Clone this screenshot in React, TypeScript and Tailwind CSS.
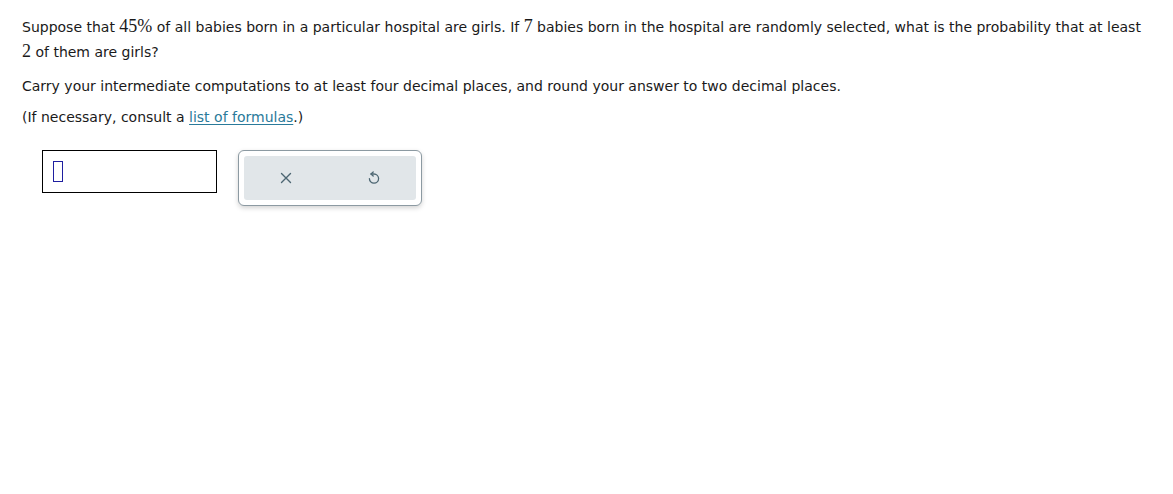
import React from 'react';

const num = "font-['Liberation_Serif',serif] text-[18px]";

export default function App() {
    return (
        <main className="min-h-screen w-full bg-white text-[#1a1a1a] font-['DejaVu_Sans',Verdana,sans-serif] text-[14px]">
            <div className="pl-[22px] pr-[30px] pt-[14px]">
                {/* Question */}
                <p className="leading-[24px]">
                    Suppose that <span className={num}>45%</span> of all babies born in a particular hospital are girls. If{' '}
                    <span className={num}>7</span> babies born in the hospital are randomly selected, what is the probability that at least{' '}
                    <span className={num}>2</span> of them are girls?
                </p>
                <p className="mt-[12px] leading-[20px]">
                    Carry your intermediate computations to at least four decimal places, and round your answer to two decimal places.
                </p>
                <p className="mt-[11px] leading-[20px]">
                    (If necessary, consult a{' '}
                    <a href="#" className="text-[#2a7a9a] underline underline-offset-2">list of formulas</a>.)
                </p>

                {/* Answer area */}
                <div className="mt-[23px] ml-[20px] flex items-start gap-[21px]">
                    <div className="w-[175px] h-[43px] border border-black flex items-center pl-[10px]">
                        <div className="w-[10px] h-[21px] border border-[#1f1fa0]" />
                    </div>
                    <div className="w-[184px] h-[56px] rounded-[6px] border border-[#8c9aa2] bg-white p-[5px] shadow-[0_2px_5px_rgba(0,0,0,0.18)]">
                        <div className="h-full rounded-[3px] bg-[#e1e6e9] flex items-center justify-between px-[27px]">
                            <button className="w-[30px] h-[30px] flex items-center justify-center text-[#4c6672]">
                                <svg width="12" height="12" viewBox="0 0 12 12" fill="none" stroke="currentColor" strokeWidth="1.4" strokeLinecap="round">
                                    <path d="M1.5 1.5 L10.5 10.5 M10.5 1.5 L1.5 10.5" />
                                </svg>
                            </button>
                            <button className="w-[30px] h-[30px] flex items-center justify-center text-[#4c6672]">
                                <svg width="12" height="15" viewBox="0 0 12 15" fill="none" stroke="currentColor" strokeWidth="1.3" strokeLinecap="round" strokeLinejoin="round">
                                    <path d="M5.2 1 L3 3 L5.2 5" />
                                    <path d="M3 3 H6 A4.6 4.6 0 1 1 1.4 7.6" />
                                </svg>
                            </button>
                        </div>
                    </div>
                </div>
            </div>
        </main>
    );
}
